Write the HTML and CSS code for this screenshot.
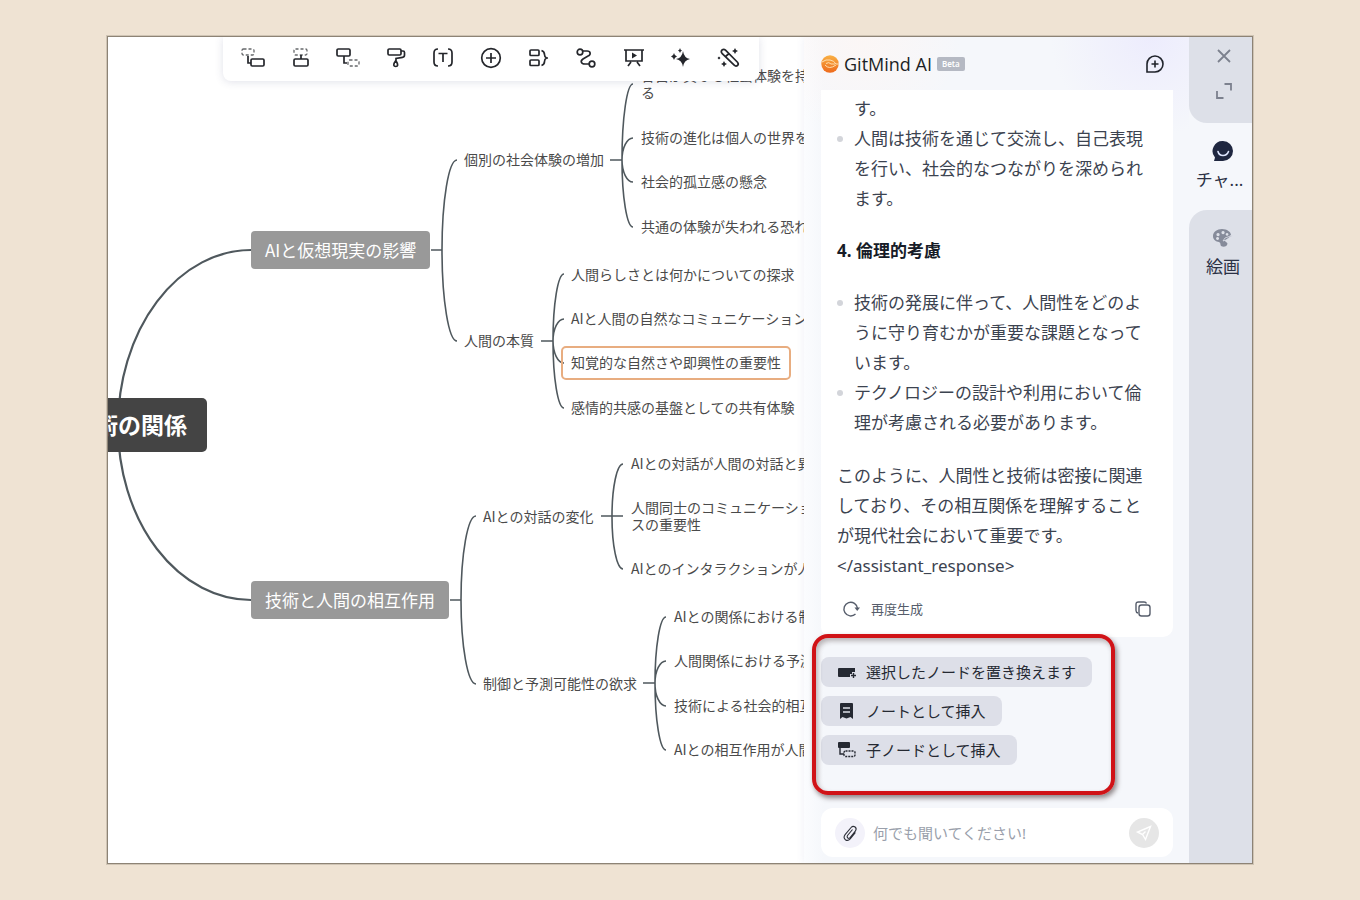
FILE: index.html
```html
<!DOCTYPE html>
<html lang="ja">
<head>
<meta charset="utf-8">
<title>GitMind AI</title>
<link rel="stylesheet" href="styles.css">
</head>
<body>
<div class="app">
  <main class="canvas">
    <svg class="links" width="700" height="830" viewBox="108 37 700 830" aria-hidden="true">
      <g class="trunk">
        <path d="M118 426A133 176 0 0 1 251 250M118 426A133 174 0 0 0 251 600"/>
      </g>
      <g class="twigs">
        <path d="M431 250H442M457 160A15 90 0 0 0 442 250A15 91 0 0 0 457 341"/>
        <path d="M610 160H622M633 84A11 76 0 0 0 622 160A11 67 0 0 0 633 227M633 138A11 22 0 0 0 622 160A11 22 0 0 0 633 182"/>
        <path d="M541 341H553M564 274A11 67 0 0 0 553 341A11 67 0 0 0 564 408M564 319A11 22 0 0 0 553 341A11 22 0 0 0 564 363"/>
        <path d="M450 600H461M476 516A15 84 0 0 0 461 600A15 84 0 0 0 476 684"/>
        <path d="M601 516H623M623 464A11 52 0 0 0 612 516A11 52 0 0 0 623 569"/>
        <path d="M643 683H655M666 617A11 66 0 0 0 655 683A11 67 0 0 0 666 750M666 661A11 22 0 0 0 655 683A11 22 0 0 0 666 706"/>
      </g>
    </svg>
    <div class="node root">術の関係</div>
    <div class="node branch b1">AIと仮想現実の影響</div>
    <div class="node branch b2">技術と人間の相互作用</div>
    <div class="node topic t1">個別の社会体験の増加</div>
    <div class="node topic t2">人間の本質</div>
    <div class="node topic t3">AIとの対話の変化</div>
    <div class="node topic t4">制御と予測可能性の欲求</div>
    <div class="node leaf l1">各自が異なる社会体験を持<br>る</div>
    <div class="node leaf l2">技術の進化は個人の世界を</div>
    <div class="node leaf l3">社会的孤立感の懸念</div>
    <div class="node leaf l4">共通の体験が失われる恐れ</div>
    <div class="node leaf l5">人間らしさとは何かについての探求</div>
    <div class="node leaf l6">AIと人間の自然なコミュニケーション</div>
    <div class="node leaf l7 selected">知覚的な自然さや即興性の重要性</div>
    <div class="node leaf l8">感情的共感の基盤としての共有体験</div>
    <div class="node leaf l9">AIとの対話が人間の対話と異</div>
    <div class="node leaf l10">人間同士のコミュニケーショ<br>スの重要性</div>
    <div class="node leaf l11">AIとのインタラクションが人</div>
    <div class="node leaf l12">AIとの関係における制</div>
    <div class="node leaf l13">人間関係における予測</div>
    <div class="node leaf l14">技術による社会的相互</div>
    <div class="node leaf l15">AIとの相互作用が人間</div>

    <div class="toolbar">
      <button type="button" aria-label="親ノード"><svg viewBox="0 0 24 24"><rect class="dash" x="1" y="2" width="12" height="6" rx="1.5"/><path d="M7 9v7h3"/><rect x="10" y="12" width="13" height="7" rx="1.2"/></svg></button>
      <button type="button" aria-label="上位ノード"><svg viewBox="0 0 24 24"><rect class="dash" x="5" y="2" width="13" height="6" rx="1.5"/><path d="M12 8v4"/><rect x="5" y="12" width="14" height="7" rx="1.2"/></svg></button>
      <button type="button" aria-label="子ノード"><svg viewBox="0 0 24 24"><rect x="1" y="2" width="13" height="7" rx="1.2"/><path d="M8 9v7h3"/><rect class="dash" x="12" y="13" width="11" height="6" rx="1.5"/></svg></button>
      <button type="button" aria-label="書式"><svg viewBox="0 0 24 24"><rect x="4" y="2" width="13" height="6" rx="1.2"/><path d="M17 4h2q1.500 0 1.500 1.500V8q0 2-2 2.300L12 11.500V14M11.800 13.500c-3.500 4.500-2 6 0 6s3-1.500 0-6"/></svg></button>
      <button type="button" aria-label="テキスト"><svg viewBox="0 0 24 24"><path d="M7 2Q3 2 3 6v9q0 4 4 4M17 2q4 0 4 4v9q0 4-4 4M7.500 6.500h9M12 6.500V15"/></svg></button>
      <button type="button" aria-label="追加"><svg viewBox="0 0 24 24"><circle cx="12" cy="11" r="9.300"/><path d="M12 6v10M7 11h10"/></svg></button>
      <button type="button" aria-label="要約"><svg viewBox="0 0 24 24"><rect x="3" y="3" width="9" height="5.500" rx="1"/><rect x="3" y="13" width="9" height="5.500" rx="1"/><path d="M14.500 3.500q3 1 3 4 0 2.500 2 3.500-2 1-2 3.500 0 3-3 4M18.500 11H21"/></svg></button>
      <button type="button" aria-label="関連線"><svg viewBox="0 0 24 24"><circle cx="6" cy="5" r="2.800"/><circle cx="18" cy="17" r="2.800"/><path d="M9 4h4c4 0 4 4 1 5l-5 3c-3 2-2 5 2 5h4"/></svg></button>
      <button type="button" aria-label="プレゼンテーション"><svg viewBox="0 0 24 24"><path d="M2 3h20M4 3v11h16V3M9 15l-3 4M15 15l3 4"/><path class="solid" d="M10 5.500v6l5-3z"/></svg></button>
      <button type="button" aria-label="AI"><svg viewBox="0 0 24 24"><path class="solid" d="M14 4q1 7 7 8-6 1-7 8-1-7-7-8 6-1 7-8zM5 6q.6 3 3 3.500Q5.600 10 5 13q-.6-3-3-3.500Q4.400 9 5 6zM11 1q.4 2 2 2.500-1.600.5-2 2.500-.4-2-2-2.500 1.600-.5 2-2.500z"/></svg></button>
      <button type="button" aria-label="マジック"><svg viewBox="0 0 24 24"><path d="M5 3q1.800-1.500 3.500.2l12 12q1.500 1.800 0 3.300-1.700 1.300-3.300-.3L5 6.300q-1.400-1.600 0-3.300zM8.500 9.500L11.500 7"/><path class="solid" d="M18 1q.6 2.500 3 3-2.400.5-3 3-.6-2.500-3-3 2.400-.5 3-3zM7 14q.6 2.500 3 3-2.400.5-3 3-.6-2.500-3-3 2.400-.5 3-3zM2 9.500l1.500 1.500L2 12.500.5 11z"/></svg></button>
    </div>
  </main>

  <section class="panel">
    <header class="panel-head">
      <svg class="logo" viewBox="0 0 18 18" aria-hidden="true"><defs><linearGradient id="lg" x1="0" y1="0" x2="0" y2="1"><stop offset="0" stop-color="#f9b044"/><stop offset="1" stop-color="#ee6a1c"/></linearGradient></defs><circle cx="9" cy="9" r="8.700" fill="url(#lg)"/><path d="M1 7q4-3 8-2 4 .5 6 4h3M5 8.500q3-2 5 .5h4M4 10q4 5 11 0" fill="none" stroke="#ffdfae" stroke-width="1"/></svg>
      <h1>GitMind AI</h1>
      <span class="badge">Beta</span>
      <button type="button" class="icon-btn new-chat" aria-label="新しいチャット"><svg viewBox="0 0 20 20"><path d="M2 18v-8a8 8 0 1 1 8 8zM10 6.500v7M6.500 10h7"/></svg></button>
    </header>

    <div class="log">
      <article class="answer">
        <ul>
          <li class="continued">す。</li>
          <li>人間は技術を通じて交流し、自己表現を行い、社会的なつながりを深められます。</li>
        </ul>
        <h2>4. 倫理的考慮</h2>
        <ul>
          <li>技術の発展に伴って、人間性をどのように守り育むかが重要な課題となっています。</li>
          <li>テクノロジーの設計や利用において倫理が考慮される必要があります。</li>
        </ul>
        <p>このように、人間性と技術は密接に関連しており、その相互関係を理解することが現代社会において重要です。&lt;/assistant_response&gt;</p>
        <div class="actions">
          <button type="button" class="regen"><svg viewBox="0 0 18 18"><path d="M13.500 14A6.800 6.800 0 1 1 15.500 8.500"/><path class="solid" d="M12.500 7.500h5.500l-2.800 3.500z"/></svg>再度生成</button>
          <button type="button" class="icon-btn" aria-label="コピー"><svg viewBox="0 0 18 18"><rect x="5" y="5" width="11" height="11" rx="2.500"/><path d="M4 13q-2-.5-2-2.500V4.500Q2 2 4.500 2H10q2 0 2.500 1.500"/></svg></button>
        </div>
      </article>

      <div class="suggestions">
        <button type="button" class="chip"><svg viewBox="0 0 20 20"><path class="solid" d="M2 6h16v4h-3v2h-2v3H2q-1 0-1-1V7q0-1 1-1z"/><path d="M16.500 11v5M14 13.500h5"/></svg>選択したノードを置き換えます</button>
        <button type="button" class="chip"><svg viewBox="0 0 20 20"><path class="solid" d="M4 2h11q1 0 1 1v15l-2.500-2-4 1.500-4-1.500L3 18V3q0-1 1-1z"/><path class="light" d="M6 7h7M6 11h7"/></svg>ノートとして挿入</button>
        <button type="button" class="chip"><svg viewBox="0 0 20 20"><rect class="solid" x="1" y="2" width="12" height="6" rx="1"/><path d="M3 8v6h4"/><rect class="dots" x="7" y="11" width="11" height="5.500" rx="1.500"/></svg>子ノードとして挿入</button>
        <div class="highlight"></div>
      </div>
    </div>

    <form class="composer">
      <button type="button" class="round clip" aria-label="添付"><svg viewBox="0 0 20 20"><path d="M12.500 6.500l-5 6q-1 1.500.3 2.500 1.200.8 2.300-.5l5.200-6.300q1.800-2.500-.2-4.200-2.200-1.600-4 .5l-6 7.200q-2.200 3 .3 5 2.500 1.800 4.800-.8l5.300-6.400"/></svg></button>
      <input type="text" aria-label="メッセージ" placeholder="何でも聞いてください!">
      <button type="button" class="round send" aria-label="送信"><svg viewBox="0 0 20 20"><path d="M16.500 3.500L3.500 9l5 2.500L11.500 16.500zM8.500 11.500l3-3"/></svg></button>
    </form>
  </section>

  <nav class="rail">
    <div class="rail-top">
      <button type="button" class="icon-btn" aria-label="閉じる"><svg viewBox="0 0 18 18"><path d="M3 3l12 12M15 3L3 15"/></svg></button>
      <button type="button" class="icon-btn" aria-label="拡大"><svg viewBox="0 0 18 18"><path d="M9.500 2H16v6.500M2 9v7h6.500"/></svg></button>
    </div>
    <button type="button" class="tab active"><svg viewBox="0 0 22 22"><path fill="#1f2740" d="M11 1a10 10 0 1 1 0 20H2l1-3.500A10 10 0 0 1 11 1z"/><path d="M6 11.500q1 4 5 4t5.500-4" fill="none" stroke="#dfe7ff" stroke-width="1.600" stroke-linecap="round"/></svg>チャ...</button>
    <button type="button" class="tab draw"><svg viewBox="0 0 22 22"><path fill="#868b9a" fill-rule="evenodd" d="M10 2c5 0 9 3 9 6l-6 5c-1 2 4 2 2 5-1 2-4 2-6 1-1-2 0-3-2-4-3-.5-6-2-6-6 0-4 4-7 9-7zM6 6a1.600 1.600 0 1 0 .1 0zM11 4a1.600 1.600 0 1 0 .1 0zM5.500 10a1.500 1.500 0 1 0 .1 0zM15 6a1.400 1.400 0 1 0 .1 0z"/><path d="M21 8l-7 5-3 1 2-3z" fill="#868b9a" stroke="#dde0e8" stroke-width=".8"/></svg>絵画</button>
  </nav>
</div>
</body>
</html>
```
FILE: styles.css
```css
* { box-sizing: border-box; }

body {
  margin: 0;
  min-height: 100vh;
  padding: 36px 107px;
  display: flex;
  background: #efe3d3;
  font-family: "Noto Sans", "Noto Sans CJK JP", sans-serif;
  color: #3c4350;
}

button {
  border: 0;
  padding: 0;
  background: none;
  font: inherit;
  color: inherit;
  cursor: pointer;
}

svg {
  fill: none;
  stroke: currentColor;
  stroke-width: 1.4;
}

svg .solid { fill: currentColor; stroke: none; }

h1, h2, p, ul { margin: 0; padding: 0; }

.app {
  flex: 1;
  display: flex;
  border: 1px solid #8d8375;
  box-shadow: 0 0 0 1px #cfc4b4;
  background: #fff;
  overflow: hidden;
}

/* Mind map */
.canvas {
  flex: 1;
  position: relative;
  overflow: hidden;
  font-family: "Noto Sans CJK JP", sans-serif;
}

.links { position: absolute; left: 0; top: 0; stroke: #4f585d; }
.trunk { stroke-width: 2.2; }
.twigs { stroke-width: 1.6; }

.node {
  position: absolute;
  white-space: nowrap;
  font-size: 14px;
  line-height: 17px;
  color: #4a4a4a;
}

.root {
  left: -20px;
  top: 361px;
  padding: 10px 20px 12px 7px;
  border-radius: 5px;
  background: #444;
  color: #fff;
  font-size: 23px;
  font-weight: 700;
  line-height: 32px;
}

.branch {
  padding: 7px 14px;
  border-radius: 4px;
  background: #999;
  color: #fff;
  font-size: 17px;
  line-height: 24px;
}

.b1 { left: 143px; top: 194px; }
.b2 { left: 143px; top: 544px; }
.t1 { left: 356px; top: 114px; }
.t2 { left: 356px; top: 295px; }
.t3 { left: 375px; top: 471px; }
.t4 { left: 375px; top: 638px; }
.l1 { left: 533px; top: 30px; }
.l2 { left: 533px; top: 92px; }
.l3 { left: 533px; top: 136px; }
.l4 { left: 533px; top: 181px; }
.l5 { left: 463px; top: 229px; }
.l6 { left: 463px; top: 273px; }
.l7 { left: 453px; top: 309px; }
.l8 { left: 463px; top: 362px; }
.l9 { left: 523px; top: 418px; }
.l10 { left: 523px; top: 462px; }
.l11 { left: 523px; top: 523px; }
.l12 { left: 566px; top: 571px; }
.l13 { left: 566px; top: 615px; }
.l14 { left: 566px; top: 660px; }
.l15 { left: 566px; top: 704px; }

.selected {
  padding: 6px 8px 7px;
  border: 2px solid #e8ad80;
  border-radius: 5px;
}

.toolbar {
  position: absolute;
  left: 115px;
  top: 0;
  width: 536px;
  height: 44px;
  padding: 0 18px;
  display: flex;
  justify-content: space-between;
  align-items: center;
  border-radius: 0 0 8px 8px;
  background: #fff;
  box-shadow: 0 1px 8px rgba(60, 70, 120, .16);
  color: #24262b;
}

.toolbar button, .toolbar svg { display: block; width: 24px; height: 24px; }
.toolbar svg { stroke-width: 1.7; }
.toolbar .dash { stroke-dasharray: 3 2; stroke-width: 1.3; opacity: .7; }

/* AI panel */
.panel {
  position: relative;
  width: 385px;
  display: flex;
  flex-direction: column;
  padding: 0 16px 6px 17px;
  background:
    radial-gradient(circle at 90% 0, rgba(236, 235, 253, .9), transparent 100px),
    radial-gradient(circle at 15% 0, rgba(253, 246, 244, .8), transparent 100px),
    linear-gradient(90deg, #fbfcfe, #f5f7fb 20px);
  box-shadow: 0 0 8px rgba(90, 100, 170, .1);
}

.panel-head {
  height: 53px;
  display: flex;
  align-items: center;
  gap: 5px;
}

.logo { width: 18px; height: 18px; stroke: none; }

h1 {
  font-family: "Open Sans", sans-serif;
  font-size: 18px;
  font-weight: 500;
  line-height: 24px;
  color: #1c1f26;
}

.badge {
  padding: 0 5px;
  border-radius: 2px;
  background: #b5b9c3;
  color: #fff;
  font-size: 8px;
  font-weight: 600;
  line-height: 14px;
}

.icon-btn svg { display: block; width: 18px; height: 18px; }

.new-chat { margin-left: auto; margin-right: 8px; color: #20232b; }
.new-chat svg { width: 20px; height: 20px; stroke-width: 1.6; }

.log { flex: 1; }

.answer {
  padding: 4px 16px 13px;
  border-radius: 0 0 10px 10px;
  background: #fff;
  font-size: 17px;
  line-height: 30px;
}

.answer ul { list-style: none; }
.answer li { position: relative; padding-left: 17px; }

.answer li::before {
  content: "";
  position: absolute;
  left: 0;
  top: 12px;
  width: 6px;
  height: 6px;
  border-radius: 50%;
  background: #d3d5da;
}

.answer .continued::before { content: none; }

.answer h2 {
  margin: 22px 0;
  font-size: 17px;
  font-weight: 700;
  line-height: 30px;
  color: #171c28;
}

.answer p { margin-top: 23px; }

.actions {
  display: flex;
  justify-content: space-between;
  align-items: center;
  height: 30px;
  margin-top: 13px;
  padding: 0 5px;
  color: #565d6b;
}

.regen { display: flex; align-items: center; gap: 11px; font-size: 13px; line-height: 20px; }
.regen svg { width: 18px; height: 18px; }

.suggestions {
  position: relative;
  display: flex;
  flex-direction: column;
  align-items: flex-start;
  gap: 9px;
  padding-top: 20px;
}

.chip {
  display: flex;
  align-items: center;
  gap: 9px;
  height: 30px;
  padding: 0 16px;
  border-radius: 8px;
  background: #dddfe8;
  font-size: 15px;
  line-height: 22px;
  color: #252932;
}

.chip svg { width: 20px; height: 20px; }
.chip .light { stroke: #dddfe8; }
.chip .dots { stroke-dasharray: 2 1; }

.highlight {
  position: absolute;
  left: -9px;
  top: -3px;
  width: 303px;
  height: 161px;
  border: 4px solid #d01317;
  border-radius: 16px;
  box-shadow: 2px 3px 5px rgba(40, 20, 20, .5), inset 2px 3px 5px rgba(40, 20, 20, .3);
  pointer-events: none;
}

.composer {
  display: flex;
  align-items: center;
  gap: 8px;
  height: 49px;
  padding: 0 14px;
  border-radius: 12px;
  background: #fff;
}

.composer input {
  flex: 1;
  min-width: 0;
  border: 0;
  padding: 0;
  outline: 0;
  background: none;
  font: inherit;
  font-size: 15px;
  line-height: 24px;
}

.composer input::placeholder { color: #9a9fab; }

.round {
  display: grid;
  place-items: center;
  width: 30px;
  height: 30px;
  border-radius: 50%;
}

.round svg { width: 20px; height: 20px; }
.clip { background: #f3f2fa; color: #2d3039; }
.clip svg { stroke-width: 1.1; }
.send { background: #e6e6e6; color: #fff; }

/* Right rail */
.rail {
  position: relative;
  width: 63px;
  display: flex;
  flex-direction: column;
  background: #f5f7fb;
  font-size: 17px;
  line-height: 24px;
  color: #2b3145;
}

.rail-top {
  height: 86px;
  display: flex;
  flex-direction: column;
  align-items: center;
  gap: 17px;
  padding: 10px 0 0 6px;
  border-bottom-left-radius: 18px;
  background: #dde0e8;
  color: #7c818e;
}

.rail-top svg { stroke-width: 1.8; }

.tab {
  display: flex;
  flex-direction: column;
  align-items: center;
  gap: 6px;
}

.tab svg { width: 22px; height: 22px; stroke: none; }
.active { height: 87px; padding: 17px 2px 0 0; }
.active svg { margin-left: 7px; }

.draw {
  flex: 1;
  padding: 17px 0 0 5px;
  border-top-left-radius: 18px;
  background: #dde0e8;
}
```
